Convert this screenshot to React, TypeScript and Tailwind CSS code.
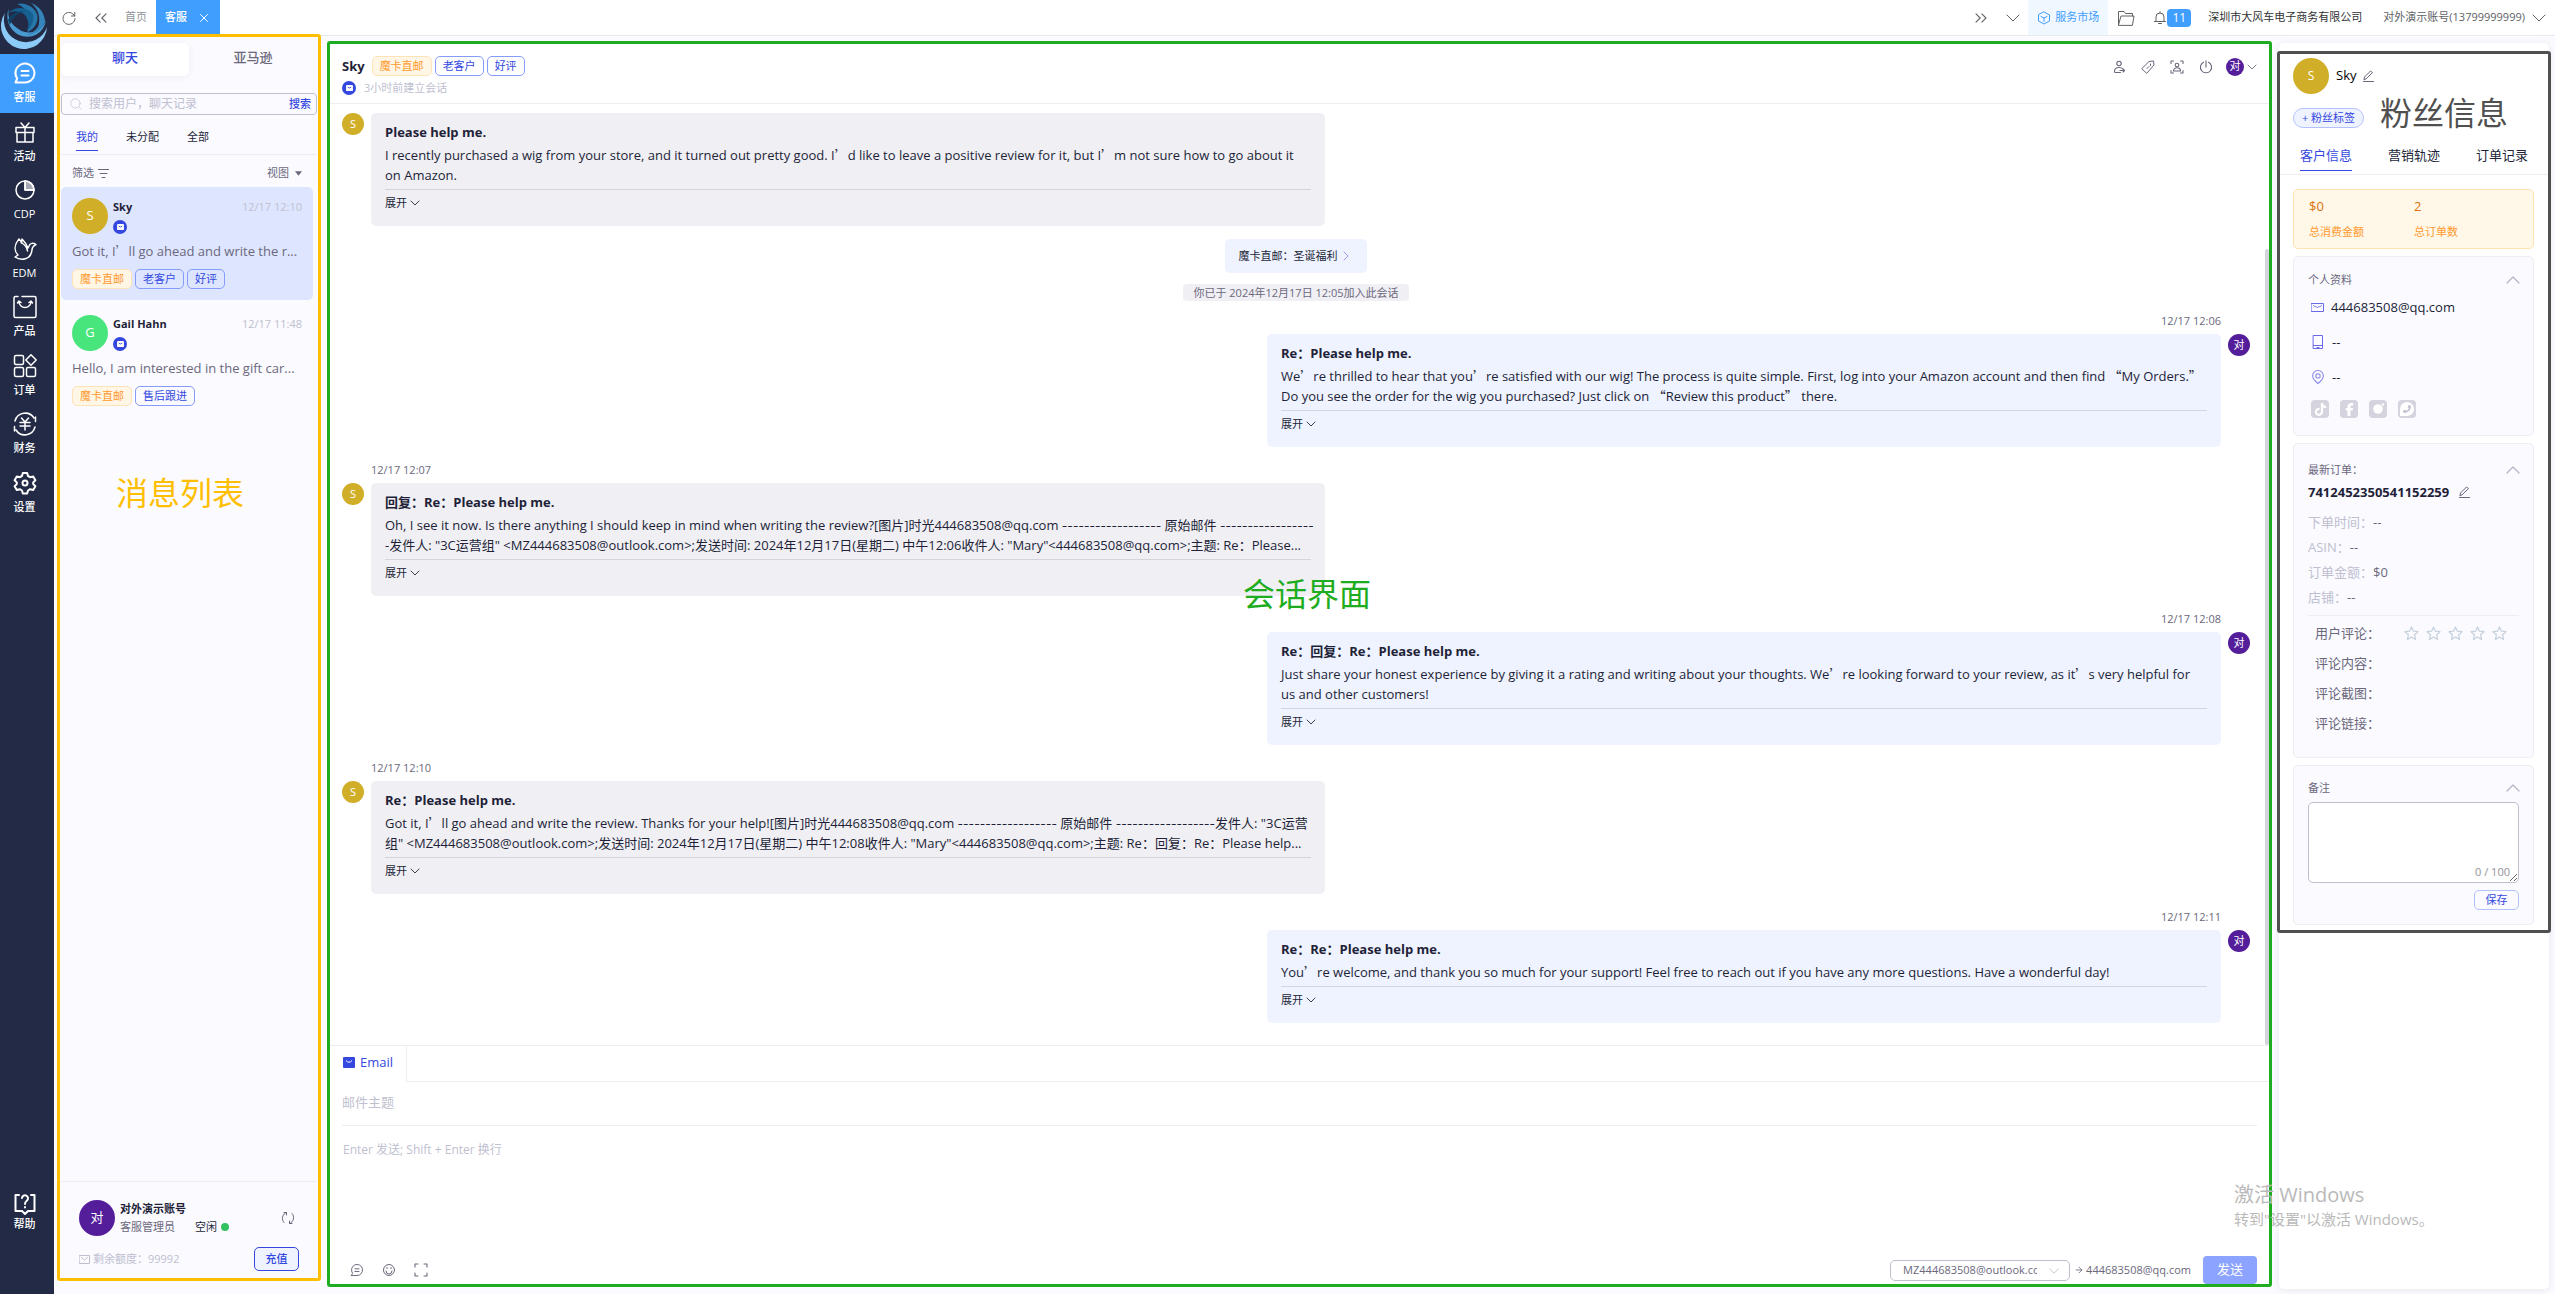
import type { ReactNode } from 'react';
import clsx from 'clsx';
import { ArrowRight, ChevronDown, ChevronRight, ChevronUp, ChevronsLeft, ChevronsRight, Search, X } from 'lucide-react';
import { FaFacebookF, FaPhone, FaTiktok } from 'react-icons/fa6';

type Message = {
    id: number;
    side: 'in' | 'out';
    time?: string;
    title: string;
    body: string;
};

type Conversation = {
    id: number;
    name: string;
    color: string;
    time: string;
    preview: string;
    tags: string[];
};

const conversations: Conversation[] = [
    { id: 1, name: 'Sky', color: 'bg-[#d1ae27]', time: '12/17 12:10', preview: 'Got it, I’ll go ahead and write the r...', tags: ['魔卡直邮', '老客户', '好评'] },
    { id: 2, name: 'Gail Hahn', color: 'bg-[#48e57c]', time: '12/17 11:48', preview: 'Hello, I am interested in the gift car...', tags: ['魔卡直邮', '售后跟进'] },
];

const firstMessage: Message = {
    id: 1,
    side: 'in',
    title: 'Please help me.',
    body: 'I recently purchased a wig from your store, and it turned out pretty good. I’d like to leave a positive review for it, but I’m not sure how to go about it\non Amazon.',
};

const messages: Message[] = [
    { id: 2, side: 'out', time: '12/17 12:06', title: 'Re：Please help me.', body: 'We’re thrilled to hear that you’re satisfied with our wig! The process is quite simple. First, log into your Amazon account and then find “My Orders.”\nDo you see the order for the wig you purchased? Just click on “Review this product” there.' },
    { id: 3, side: 'in', time: '12/17 12:07', title: '回复：Re：Please help me.', body: 'Oh, I see it now. Is there anything I should keep in mind when writing the review?[图片]时光444683508@qq.com ------------------ 原始邮件 -----------------\n-发件人: "3C运营组" <MZ444683508@outlook.com>;发送时间: 2024年12月17日(星期二) 中午12:06收件人: "Mary"<444683508@qq.com>;主题: Re：Please...' },
    { id: 4, side: 'out', time: '12/17 12:08', title: 'Re：回复：Re：Please help me.', body: 'Just share your honest experience by giving it a rating and writing about your thoughts. We’re looking forward to your review, as it’s very helpful for\nus and other customers!' },
    { id: 5, side: 'in', time: '12/17 12:10', title: 'Re：Please help me.', body: 'Got it, I’ll go ahead and write the review. Thanks for your help![图片]时光444683508@qq.com ------------------ 原始邮件 ------------------发件人: "3C运营\n组" <MZ444683508@outlook.com>;发送时间: 2024年12月17日(星期二) 中午12:08收件人: "Mary"<444683508@qq.com>;主题: Re：回复：Re：Please help...' },
    { id: 6, side: 'out', time: '12/17 12:11', title: 'Re：Re：Please help me.', body: 'You’re welcome, and thank you so much for your support! Feel free to reach out if you have any more questions. Have a wonderful day!' },
];

// Curly quotes are full-width in the CJK face, dashed rules get a wider hyphen
function Mixed({ text }: { text: string }) {
    return (
        <>
            {text.split(/([’“”]|-{3,})/).map((part, i) => {
                if (i % 2 === 0) return part;
                return (
                    <span key={i} className={part[0] === '-' ? "font-['Inter',sans-serif] text-[12px] leading-none" : "font-['Noto_Sans_CJK_SC',sans-serif] leading-none"}>
                        {part}
                    </span>
                );
            })}
        </>
    );
}

function Icon({ children, className, box = 24, stroke = 1.5 }: { children: ReactNode; className?: string; box?: number; stroke?: number }) {
    return (
        <svg viewBox={`0 0 ${box} ${box}`} className={className} fill="none" stroke="currentColor" strokeWidth={stroke} strokeLinecap="round" strokeLinejoin="round" aria-hidden="true">
            {children}
        </svg>
    );
}

function Logo() {
    return (
        <svg viewBox="0 0 54 54" className="h-[54px] w-[54px]" aria-hidden="true">
            <path d="M5 13A23 23 0 1 0 47 27A21 21 0 0 1 5 13Z" fill="#8ccbf8" />
            <path d="M9 8A21 21 0 0 0 19 35A19 19 0 0 0 46 20A18 18 0 0 1 17 28A18 18 0 0 1 9 8Z" fill="#4a9ad2" />
            <path d="M31 3A21 21 0 0 1 38 27A22 22 0 0 1 26 35A21 21 0 0 0 45 22A21 21 0 0 0 31 3Z" fill="#3585bb" />
            <path d="M17 4A19 19 0 0 1 27 32A15 15 0 0 0 37 14A18 18 0 0 0 17 4Z" fill="#2877aa" />
            <path d="M8 13A17 17 0 0 1 33 14A15 15 0 0 1 27 30A14 14 0 0 0 24 14A16 16 0 0 0 8 13Z" fill="#155f91" />
            <path d="M8 20A15 15 0 0 1 25 12A16 16 0 0 0 10 25Z" fill="#0e4168" />
        </svg>
    );
}

function ChatIcon({ className, stroke }: { className?: string; stroke?: number }) {
    return (
        <Icon className={className} stroke={stroke}>
            <path d="M2.5 21.5H12A9.5 9.5 0 1 0 4.2 17.5Z" />
            <path d="M8.5 10h7M8.5 14.5h7" />
        </Icon>
    );
}

const navItems = [
    { label: '客服', icon: <ChatIcon className="size-6" stroke={2} /> },
    { label: '活动', icon: <Icon className="size-6"><path d="M3 7.500h18v5H3zM4 12.500h16V22H4zM12 7.500V22M12 7.500L8 3M12 7.500L16 3" /></Icon> },
    { label: 'CDP', icon: <Icon className="size-6"><circle cx="12" cy="12" r="9" /><path d="M12 3V12H21" /><path d="M12 3a9 9 0 0 1 9 9h-9z" fill="currentColor" fillOpacity="0.6" /></Icon> },
    { label: 'EDM', icon: <Icon className="size-6"><path d="M6 2C1 8 1 14 5 18L2 20C8 24 18 23 19 13C19 10 20 9 23 7.500C20 5.500 17 6 16 9L15 11C13 6 11 4 9 2L8.500 6C8 4 7 3 6 2ZM9 6C12 8 14 11 14.500 14" /></Icon> },
    { label: '产品', icon: <Icon className="size-6"><path d="M5 1.500H2.500A1.500 1.500 0 0 0 1 3v18a1.500 1.500 0 0 0 1.500 1.500h19A1.500 1.500 0 0 0 23 21V3a1.500 1.500 0 0 0-1.500-1.500H9M6 6.500a6 6 0 0 0 12 0M4.500 8l1.500-2 2 1.500M19.500 8L18 6l-2 1.500" /></Icon> },
    { label: '订单', icon: <Icon className="size-6"><rect x="1.500" y="1.500" width="9" height="9" rx="1.500" /><rect x="1.500" y="13.500" width="9" height="9" rx="1.500" /><rect x="13.500" y="13.500" width="9" height="9" rx="1.500" /><path d="M18 .8l5.200 5.200L18 11.200 12.800 6z" /></Icon> },
    { label: '财务', icon: <Icon className="size-6"><path d="M2 9A10.500 10.500 0 0 1 21 6M22 15A10.500 10.500 0 0 1 3 18M22.500 5v4.500M1.500 14.500V19M8.500 6l3.500 4 3.500-4M7 10.500h10M7 14h10M12 10v8" /></Icon> },
    { label: '设置', icon: <Icon className="size-6" stroke={2}><path d="M9.800 2h4.400l.8 3 2.200 1.200 3-.8 2.200 3.800L20.200 11.400v1.700l2.200 2.100-2.200 3.800-3-.8L15 19.500l-.8 3H9.800l-.8-3-2.200-1.300-3 .8-2.200-3.800 2.200-2.100v-1.700L1.600 9.200l2.200-3.800 3 .8L9 5z" /><circle cx="12" cy="12" r="2.500" /></Icon> },
];

function MailBadge() {
    return (
        <span className="flex size-[14px] shrink-0 items-center justify-center rounded-full bg-[#3448e0]">
            <svg viewBox="0 0 8 7" className="h-[6px] w-[7px]" aria-hidden="true">
                <rect width="8" height="7" rx="1" fill="#fff" />
                <path d="M2 2.500Q4 4.500 6 2.500" stroke="#3448e0" fill="none" />
            </svg>
        </span>
    );
}

function Tag({ children, warm }: { children: string; warm?: boolean }) {
    return (
        <span className={clsx('flex h-5 items-center rounded-[5px] border px-[7px] text-[11px]', warm ? 'border-[#ffe3b8] bg-[#fff6e6] text-[#ff9a2e]' : 'border-[#859cfb] text-[#3448e0]')}>
            {children}
        </span>
    );
}

function TagList({ tags }: { tags: string[] }) {
    return (
        <div className="flex gap-[3px]">
            {tags.map((tag, i) => <Tag key={tag} warm={i === 0}>{tag}</Tag>)}
        </div>
    );
}

function Avatar({ text, className }: { text: string; className: string }) {
    return <span className={clsx('flex shrink-0 items-center justify-center rounded-full text-white', className)}>{text}</span>;
}

function EditIcon() {
    return (
        <Icon className="size-[12px] text-[#6b687c]" box={12} stroke={1}>
            <path d="M1.500 11.500h10M2 9.500l.5-2.500L8.500 1l2 1.500L4.500 8.500z" />
        </Icon>
    );
}

function SideNav() {
    return (
        <nav className="flex w-[54px] shrink-0 flex-col bg-[#222a45] text-white">
            <Logo />
            <div className="flex h-[468px] flex-col">
                {navItems.map((item, i) => (
                    <button key={item.label} className={clsx('flex flex-1 flex-col items-center justify-center gap-1 pr-[5px]', i === 0 && 'bg-[#409eff]')}>
                        {item.icon}
                        <span className="text-[11px] leading-4 font-medium">{item.label}</span>
                    </button>
                ))}
            </div>
            <button className="mt-auto mb-[62px] flex flex-col items-center pr-[5px]">
                <Icon className="size-6" stroke={2}>
                    <path d="M6 3H2.500v16H9l3 3 3-3h6.500V3H18M9 6a3 3 0 1 1 5 2.500c-1.500 1-2 1.500-2 3.500M12 15v.5" />
                </Icon>
                <span className="text-[11px] leading-4 font-medium">帮助</span>
            </button>
        </nav>
    );
}

function TopBar() {
    return (
        <header className="flex h-9 shrink-0 items-center border-b border-[#e9e9f0] bg-white text-[11px] text-[#606266]">
            <button aria-label="刷新" className="ml-2 flex w-[14px]">
                <Icon className="size-[14px]" box={14} stroke={1}><path d="M12.500 5A6 6 0 1 0 13 7.500M12.800 1.500V5H9.500" /></Icon>
            </button>
            <button aria-label="向左" className="ml-[15px]"><ChevronsLeft size={20} strokeWidth={1.3} /></button>
            <a href="#home" className="ml-[14px] text-[#909399]">首页</a>
            <a href="#service" className="ml-[9px] flex h-full w-[64px] items-center gap-[10px] bg-[#409eff] pl-[9px] font-medium text-white">
                客服 <X size={14} strokeWidth={1.7} />
            </a>
            <button aria-label="向右" className="ml-auto"><ChevronsRight size={20} strokeWidth={1.3} /></button>
            <button aria-label="更多" className="ml-[10px]"><ChevronDown size={24} strokeWidth={1} /></button>
            <a href="#market" className="ml-[3px] flex h-full w-20 items-center justify-center gap-1 bg-[#f0f7ff] text-[#409eff]">
                <Icon className="size-[14px]" box={14} stroke={1}><path d="M7 1l5.500 3v6L7 13 1.500 10V4zM4 5.500L7 7l3-1.500M7 7v3.500" /></Icon>
                服务市场
            </a>
            <button aria-label="文件" className="ml-[9px]">
                <Icon className="size-[18px]" box={18} stroke={1}><path d="M1.500 16V2.500H7l1.500 2h7V7M1.500 16L4 7h13l-1.500 9z" /></Icon>
            </button>
            <button aria-label="通知" className="ml-[18px] flex items-center">
                <Icon className="size-[14px]" box={14} stroke={1}><path d="M1.500 10.500h11M3 10.500V6a4 4 0 0 1 8 0v4.500M7 .8V2M5.500 12.500h3" /></Icon>
                <span className="flex h-[18px] w-6 items-center justify-center rounded-[4px] bg-[#409eff] text-[12px] text-white">11</span>
            </button>
            <span className="ml-[17px] text-[#303133]">深圳市大风车电子商务有限公司</span>
            <button className="mr-1 ml-[21px] flex items-center gap-[2px]">
                对外演示账号(13799999999) <ChevronDown size={24} strokeWidth={1} />
            </button>
        </header>
    );
}

function ConversationPanel() {
    return (
        <aside className="relative mb-[13px] ml-[3px] flex w-[264px] shrink-0 flex-col px-1">
            <div className="mt-[7px] flex h-[33px] text-[13px]">
                <button className="flex-1 rounded-[5px] bg-white pb-[3px] font-medium text-[#3448e0] shadow-[0_1px_8px_rgba(0,0,0,0.06)]">聊天</button>
                <button className="flex-1 pb-[3px] font-medium text-[#6b687c]">亚马逊</button>
            </div>
            <div className="mt-[17px] flex h-[22px] items-center rounded-[4px] border border-[#c0bfd0] px-[5px]">
                <Search size={14} strokeWidth={1.2} className="mx-[2px] text-[#c0bfd0]" />
                <input type="text" aria-label="搜索" placeholder="搜索用户，聊天记录" className="ml-1 min-w-0 flex-1 text-[12px] outline-none placeholder:text-[#c0bfd0]" />
                <button className="text-[11px] font-medium text-[#3448e0]">搜索</button>
            </div>
            <div className="flex h-10 gap-7 border-b border-[#eeedf3] pt-2 pl-[15px] text-[11px] leading-5 text-[#221f38]">
                <button className="mb-[3px] border-b border-[#3448e0] text-[#3448e0]">我的</button>
                <button className="mb-1">未分配</button>
                <button className="mb-1">全部</button>
            </div>
            <div className="flex h-8 items-center justify-between pt-1 pr-[15px] pl-[11px] text-[11px] text-[#6b687c]">
                <button className="flex items-center gap-1">
                    筛选
                    <Icon className="size-[11px]" box={11} stroke={1}><path d="M0 1.500h11M2 5.500h7M4 9.500h3" /></Icon>
                </button>
                <button className="flex items-center gap-[6px]">
                    视图
                    <svg viewBox="0 0 8 5" className="h-[5px] w-[7px]" aria-hidden="true"><path d="M0 0H8L4 5Z" fill="currentColor" /></svg>
                </button>
            </div>
            <ul className="flex flex-col gap-1">
                {conversations.map((c, i) => (
                    <li key={c.id} className={clsx('mr-1 h-[113px] rounded-[5px] px-[11px] pt-[11px]', i === 0 && 'bg-[#dee6ff]')}>
                        <div className="flex">
                            <Avatar text={c.name[0]} className={clsx('size-9 text-[13px]', c.color)} />
                            <div className="ml-[5px] flex-1">
                                <div className="flex h-[18px] items-center justify-between text-[11px]">
                                    <b className="text-[#221f38]">{c.name}</b>
                                    <time className="text-[#c0bfd0]">{c.time}</time>
                                </div>
                                <div className="mt-1"><MailBadge /></div>
                            </div>
                        </div>
                        <p className="mt-[7px] mb-2 truncate text-[13px] leading-5 text-[#6b687c]"><Mixed text={c.preview} /></p>
                        <TagList tags={c.tags} />
                    </li>
                ))}
            </ul>
            <div className="mt-auto h-[100px] border-t border-[#eeedf3] px-[18px] pt-[18px] text-[11px]">
                <div className="flex items-center">
                    <Avatar text="对" className="size-9 bg-[#541e9b] text-[13px]" />
                    <div className="ml-[5px] leading-[18px]">
                        <b className="block text-[#221f38]">对外演示账号</b>
                        <div className="flex items-center text-[#6b687c]">
                            客服管理员
                            <span className="ml-5 text-[#221f38]">空闲</span>
                            <i className="ml-1 size-2 rounded-full bg-[#34c162]" />
                        </div>
                    </div>
                    <button aria-label="切换" className="mr-1 ml-auto text-[#6b687c]">
                        <Icon className="size-[14px]" box={14} stroke={1}><path d="M5.500 1.500A6 6 0 0 0 3 11.500M8.500 12.500A6 6 0 0 0 11 2.500M3 1.500h2.500V4M11 12.500H8.500V10" /></Icon>
                    </button>
                </div>
                <div className="mt-[11px] flex items-center text-[#c0bfd0]">
                    <Icon className="mr-[3px] size-[11px]" box={11} stroke={1}><path d="M.5 1.500h10v8H.5zM2.500 3.500l3 2.500 3-2.500" /></Icon>
                    剩余额度：99992
                    <button className="ml-auto h-6 w-[45px] rounded-[5px] border border-[#3448e0] bg-[#eef3ff] font-medium text-[#3448e0]">充值</button>
                </div>
            </div>
            <div className="pointer-events-none absolute inset-x-0 -top-[2px] bottom-0 rounded-[3px] border-[3px] border-[#ffbf00]" />
            <div className="absolute top-[437px] left-[59px] text-[32px] leading-10 text-[#ffbf00]">消息列表</div>
        </aside>
    );
}

function Bubble({ message }: { message: Message }) {
    const out = message.side === 'out';
    return (
        <article className={clsx('flex w-full flex-col pt-[9px] pb-[3px]', out && 'items-end')}>
            {message.time && <time className={clsx('mb-1 h-5 text-[11px] leading-[22px] text-[#6b687c]', out ? 'mr-[29px]' : 'ml-[29px]')}>{message.time}</time>}
            <div className={clsx('flex w-full gap-[7px]', out && 'flex-row-reverse')}>
                <Avatar text={out ? '对' : 'S'} className={clsx('size-[22px] text-[11px]', out ? 'bg-[#541e9b]' : 'bg-[#d1ae27]')} />
                <div className={clsx('w-1/2 overflow-hidden rounded-[5px] px-[14px] pt-2 pb-[10px] text-[13px] text-[#221f38]', out ? 'bg-[#eff3ff]' : 'bg-[#f0eff4]')}>
                    <h3 className="h-6 leading-[22px] font-bold">{message.title}</h3>
                    <div className="border-b border-[#d4d3de] pb-1 leading-5 whitespace-nowrap">
                        {message.body.split('\n').map(line => <p key={line} className="h-5"><Mixed text={line} /></p>)}
                    </div>
                    <button className="flex h-[26px] items-center text-[11px]">
                        展开 <ChevronDown size={16} strokeWidth={1.3} />
                    </button>
                </div>
            </div>
        </article>
    );
}

function ChatHeader() {
    return (
        <div className="flex h-[60px] shrink-0 justify-between border-b border-[#eeedf3] pt-3 pr-[9px] pl-3">
            <div>
                <div className="flex items-center gap-[7px]">
                    <b className="text-[13px] leading-5 text-[#221f38]">Sky</b>
                    <TagList tags={['魔卡直邮', '老客户', '好评']} />
                </div>
                <div className="mt-1 flex items-center gap-2 text-[11px] leading-4 text-[#c0bfd0]">
                    <MailBadge />
                    3小时前建立会话
                </div>
            </div>
            <div className="flex h-5 items-center gap-[15px] pt-px text-[#6b687c]">
                <div className="flex items-center gap-[15px]">
                    <button aria-label="转接">
                        <Icon className="size-[14px]" box={14} stroke={1.1}><circle cx="7" cy="3.500" r="2.200" /><path d="M8.500 12.500H3.500a1 1 0 0 1-1-1C2.500 9 4.500 7.500 7 7.500c1.500 0 3 .5 4 1.500M8 10.500h4.500M11 9l1.500 1.500L11 12" /></Icon>
                    </button>
                    <button aria-label="标签">
                        <Icon className="size-[14px]" box={14} stroke={1}><path d="M1 8.500L8 1.500l4.500-.5L13 5l-7 8zM9.500 4v1.500M6 8.500l2-2" /></Icon>
                    </button>
                    <button aria-label="客户">
                        <Icon className="size-[14px]" box={14} stroke={1.1}><path d="M1 3.500V1h2.500M10.500 1H13v2.500M13 10.500V13h-2.500M3.500 13H1v-2.500M3.500 11h7c0-2-1.500-3.200-3.500-3.200S3.500 9 3.500 11z" /><circle cx="7" cy="5" r="1.800" /></Icon>
                    </button>
                    <button aria-label="结束">
                        <Icon className="size-[14px]" box={14} stroke={1.1}><path d="M7 .8V7M4.500 2.200a5.600 5.600 0 1 0 5 0" /></Icon>
                    </button>
                </div>
                <button aria-label="客服" className="-ml-[2px] flex items-center">
                    <Avatar text="对" className="size-[18px] bg-[#541e9b] text-[11px]" />
                    <ChevronDown size={16} strokeWidth={1.3} />
                </button>
            </div>
        </div>
    );
}

function Composer() {
    return (
        <form className="flex h-[239px] shrink-0 flex-col border-t border-[#eeedf3] text-[13px]">
            <div className="flex h-9 shrink-0">
                <button type="button" className="flex w-[77px] items-center gap-[5px] border-r border-[#eeedf3] pb-[3px] pl-[13px] text-[13px] text-[#3448e0]">
                    <svg viewBox="0 0 12 11" className="h-[11px] w-3" aria-hidden="true">
                        <rect width="12" height="11" rx="1" fill="#3448e0" />
                        <path d="M3 3.500Q6 7 9 3.500" stroke="#fff" fill="none" />
                    </svg>
                    Email
                </button>
                <div className="flex-1 border-b border-[#eeedf3]" />
            </div>
            <input type="text" aria-label="邮件主题" placeholder="邮件主题" className="mx-3 h-11 shrink-0 border-b border-[#eeedf3] pb-1 outline-none placeholder:text-[#c0bfd0]" />
            <textarea aria-label="消息" placeholder="Enter 发送; Shift + Enter 换行" className="mx-[13px] mt-[14px] flex-1 resize-none text-[12px] leading-5 outline-none placeholder:text-[#c0bfd0]" />
            <div className="flex h-7 shrink-0 items-center pr-3 pl-[20px] text-[#6b687c]">
                <div className="flex gap-[18px]">
                    <button type="button" aria-label="快捷回复"><ChatIcon className="size-[14px]" stroke={1.7} /></button>
                    <button type="button" aria-label="表情">
                        <Icon className="size-[14px]" box={14} stroke={1}><circle cx="7" cy="7" r="5.500" /><path d="M4 8a3 3 0 0 0 6 0M5 4.500v1M9 4.500v1" /></Icon>
                    </button>
                    <button type="button" aria-label="全屏">
                        <Icon className="size-[14px]" box={14} stroke={1.1}><path d="M1 4V1h3M10 1h3v3M13 10v3h-3M4 13H1v-3" /></Icon>
                    </button>
                </div>
                <div className="relative ml-auto">
                    <select aria-label="发件邮箱" className="h-[21px] w-[180px] appearance-none overflow-hidden rounded-[5px] border border-[#c0bfd0] pr-8 pl-[12px] text-[11px] leading-4 outline-none">
                        <option>MZ444683508@outlook.com</option>
                    </select>
                    <ChevronDown size={18} strokeWidth={1.2} className="pointer-events-none absolute top-[2px] right-[7px] text-[#c0bfd0]" />
                </div>
                <ArrowRight size={10} strokeWidth={2} className="mr-[2px] ml-[4px]" />
                <span className="text-[11px]">444683508@qq.com</span>
                <button type="submit" className="ml-3 h-7 w-[54px] rounded-[4px] bg-[#8ca3ff] text-white">发送</button>
            </div>
        </form>
    );
}

function ChatPanel() {
    return (
        <main className="relative mt-[5px] mb-[7px] ml-[6px] flex min-w-0 flex-1 flex-col bg-white p-[3px]">
            <ChatHeader />
            <div className="relative min-h-0 flex-1 overflow-hidden pr-[19px] pl-3">
                <Bubble message={firstMessage} />
                <div className="flex flex-col items-center text-[11px] text-[#221f38]">
                    <button className="mt-[10px] flex h-[34px] w-[142px] items-center justify-center rounded-[5px] bg-[#eff3ff]">
                        魔卡直邮：圣诞福利 <ChevronRight size={16} strokeWidth={1.5} className="text-[#a5a0ee]" />
                    </button>
                    <p className="mt-[11px] h-[17px] rounded-[4px] bg-[#f0eff4] px-[10px] leading-[17px] text-[#6b687c]">你已于 2024年12月17日 12:05加入此会话</p>
                </div>
                {messages.map(m => <Bubble key={m.id} message={m} />)}
                <div className="absolute top-[145px] right-0 bottom-0 w-1 rounded-full bg-[#d4d3de]" />
            </div>
            <Composer />
            <div className="pointer-events-none absolute inset-0 rounded-[3px] border-[3px] border-[#1ead20]" />
            <div className="absolute top-[533px] left-[916px] text-[32px] leading-10 text-[#1ead20]">会话界面</div>
        </main>
    );
}

function Card({ title, className, children }: { title: string; className?: string; children: ReactNode }) {
    return (
        <section className={clsx('rounded-[5px] border border-[#eeedf3] bg-[#fafaff] px-[14px]', className)}>
            <div className="flex h-5 items-center justify-between text-[11px] text-[#6b687c]">
                <h4>{title}</h4>
                <button aria-label="收起"><ChevronUp size={24} strokeWidth={1.2} className="-mr-[6px] text-[#b5b3c4]" /></button>
            </div>
            {children}
        </section>
    );
}

const orderRows = [
    { label: '下单时间：', value: '--' },
    { label: 'ASIN：', value: '--' },
    { label: '订单金额：', value: '$0' },
    { label: '店铺：', value: '--' },
];

function CustomerPanel() {
    return (
        <aside className="relative mt-[7px] mr-[6px] mb-[5px] ml-[7px] w-[270px] shrink-0 rounded-[5px] bg-white shadow-[0_1px_8px_rgba(0,0,0,0.08)]">
            <div className="flex items-center px-[14px] pt-[15px]">
                <Avatar text="S" className="size-9 bg-[#d1ae27] text-[12px]" />
                <span className="mr-[6px] ml-[7px] text-[13px] text-black">Sky</span>
                <EditIcon />
            </div>
            <button className="mt-[14px] ml-[14px] h-5 w-[71px] rounded-full border border-[#b3c2ff] bg-[#eff3ff] text-[11px] leading-4 text-[#3448e0]">+ 粉丝标签</button>
            <div className="mt-[11px] flex h-9 justify-between border-b border-[#eeedf3] px-[21px] text-[13px] leading-5 text-[#221f38]">
                <button className="mb-[3px] border-b border-[#3448e0] text-[#3448e0]">客户信息</button>
                <button className="mb-1">营销轨迹</button>
                <button className="mb-1">订单记录</button>
            </div>
            <div className="mt-[14px] mr-[15px] ml-[14px] flex flex-col gap-[7px]">
                <dl className="grid h-[60px] grid-cols-[105px_1fr] rounded-[5px] border border-[#ffe3b0] bg-[#fff7e8] px-[15px] pt-[6px]">
                    <div className="flex flex-col-reverse justify-end gap-2">
                        <dt className="text-[11px] leading-4 text-[#ff9a2e]">总消费金额</dt>
                        <dd className="text-[13px] leading-5 text-[#d9720c]">$0</dd>
                    </div>
                    <div className="flex flex-col-reverse justify-end gap-2">
                        <dt className="text-[11px] leading-4 text-[#ff9a2e]">总订单数</dt>
                        <dd className="text-[13px] leading-5 text-[#d9720c]">2</dd>
                    </div>
                </dl>
                <Card title="个人资料" className="h-[180px] pt-[13px]">
                    <ul className="mt-[7px] flex flex-col gap-[15px] pl-[3px] text-[13px] leading-5 text-[#221f38]">
                        <li className="flex items-center gap-[7px]">
                            <Icon className="size-[13px] text-[#6a6ae8]" box={13} stroke={1}><path d="M.5 2.500h12v8H.5zM2.500 4.500c1.500 2 2.500.5 4 2 1.500-1.500 2.500 0 4-2" /></Icon>
                            444683508@qq.com
                        </li>
                        <li className="flex items-center gap-[7px]">
                            <Icon className="size-[14px] text-[#6a6ae8]" box={14} stroke={1}><path d="M2.500.5h9v13h-9zM2.500 10.500h9M6 12.500h2" /></Icon>
                            --
                        </li>
                        <li className="flex items-center gap-[7px]">
                            <Icon className="size-[14px] text-[#8a8aea]" box={13} stroke={1}><path d="M6.500 12.500C4 10.500 1.500 8 1.500 5.500a5 5 0 0 1 10 0c0 2.500-2.500 5-5 7z" /><circle cx="6.500" cy="5.500" r="2" /></Icon>
                            --
                        </li>
                    </ul>
                    <div className="mt-[13px] ml-[3px] flex gap-[11px] text-white">
                        <span className="flex size-[18px] items-center justify-center rounded-[4px] bg-[#d4d3de]"><FaTiktok size={13} /></span>
                        <span className="flex size-[18px] items-center justify-center rounded-[4px] bg-[#d4d3de]"><FaFacebookF size={13} /></span>
                        <span className="flex size-[18px] items-center justify-center rounded-[4px] bg-[#d4d3de]">
                            <svg viewBox="0 0 18 18" className="size-[18px]" fill="currentColor" aria-hidden="true"><circle cx="9" cy="9" r="4.800" /><circle cx="14" cy="4.500" r="1.200" /></svg>
                        </span>
                        <span className="flex size-[18px] items-center justify-center rounded-[4px] bg-[#d4d3de]">
                            <span className="flex size-[14px] items-center justify-center rounded-full rounded-bl-none bg-white text-[#c4c2d0]"><FaPhone size={8} className="-scale-x-100" /></span>
                        </span>
                    </div>
                </Card>
                <Card title="最新订单：" className="h-[315px] pt-4">
                    <div className="mt-[2px] flex items-center gap-[9px] text-[13px] leading-5 text-[#221f38]">
                        <b>7412452350541152259</b>
                        <EditIcon />
                    </div>
                    <dl className="mt-2 border-b border-[#eeedf3] pb-[5px] text-[13px] leading-[25px]">
                        {orderRows.map(row => (
                            <div key={row.label} className="flex">
                                <dt className="text-[#c0bfd0]">{row.label}</dt>
                                <dd className="text-[#6b687c]">{row.value}</dd>
                            </div>
                        ))}
                    </dl>
                    <dl className="mt-[2px] pl-[7px] text-[13px] leading-[30px] text-[#6b687c]">
                        <div className="flex items-center">
                            <dt>用户评论：</dt>
                            <dd className="ml-6 flex gap-[7px] text-[#c6d1de]">
                                {[1, 2, 3, 4, 5].map(n => (
                                    <Icon key={n} className="size-[15px]" box={15} stroke={1.2}><path d="M7.500 1l1.900 4.200 4.600.5-3.400 3.100.9 4.600-4-2.300-4 2.300.9-4.600L1 5.700l4.600-.5z" /></Icon>
                                ))}
                            </dd>
                        </div>
                        <dt>评论内容：</dt>
                        <dt>评论截图：</dt>
                        <dt>评论链接：</dt>
                    </dl>
                </Card>
                <Card title="备注" className="h-[160px] pt-3">
                    <div className="relative mt-[4px]">
                        <textarea aria-label="备注" maxLength={100} className="block h-[81px] w-full rounded-[5px] border border-[#c0bfd0] bg-white p-2 text-[12px] outline-none" />
                        <span className="absolute right-[9px] bottom-[3px] text-[11px] leading-4 text-[#909399]">0 / 100</span>
                    </div>
                    <button className="mt-[7px] ml-auto block h-5 w-[45px] rounded-[5px] border border-[#b3c2ff] text-[11px] leading-4 text-[#3448e0]">保存</button>
                </Card>
            </div>
            <div className="pointer-events-none absolute -inset-x-[2px] top-2 h-[882px] rounded-[3px] border-[3px] border-[#505050]" />
            <div className="absolute top-[50px] left-[101px] text-[32px] leading-10 text-[#505050]">粉丝信息</div>
        </aside>
    );
}

export default function App() {
    return (
        <div className="relative flex h-screen overflow-hidden bg-[#fafaff] font-['Open_Sans','Noto_Sans_CJK_SC',sans-serif]">
            <SideNav />
            <div className="flex min-w-0 flex-1 flex-col">
                <TopBar />
                <div className="flex min-h-0 flex-1">
                    <ConversationPanel />
                    <ChatPanel />
                    <CustomerPanel />
                </div>
            </div>
            <div className="pointer-events-none absolute right-[127px] bottom-[63px] w-[194px] whitespace-nowrap text-[#b9b9b9]">
                <p className="text-[20px] leading-6">激活 Windows</p>
                <p className="text-[15px] leading-6">转到"设置"以激活 Windows。</p>
            </div>
        </div>
    );
}
